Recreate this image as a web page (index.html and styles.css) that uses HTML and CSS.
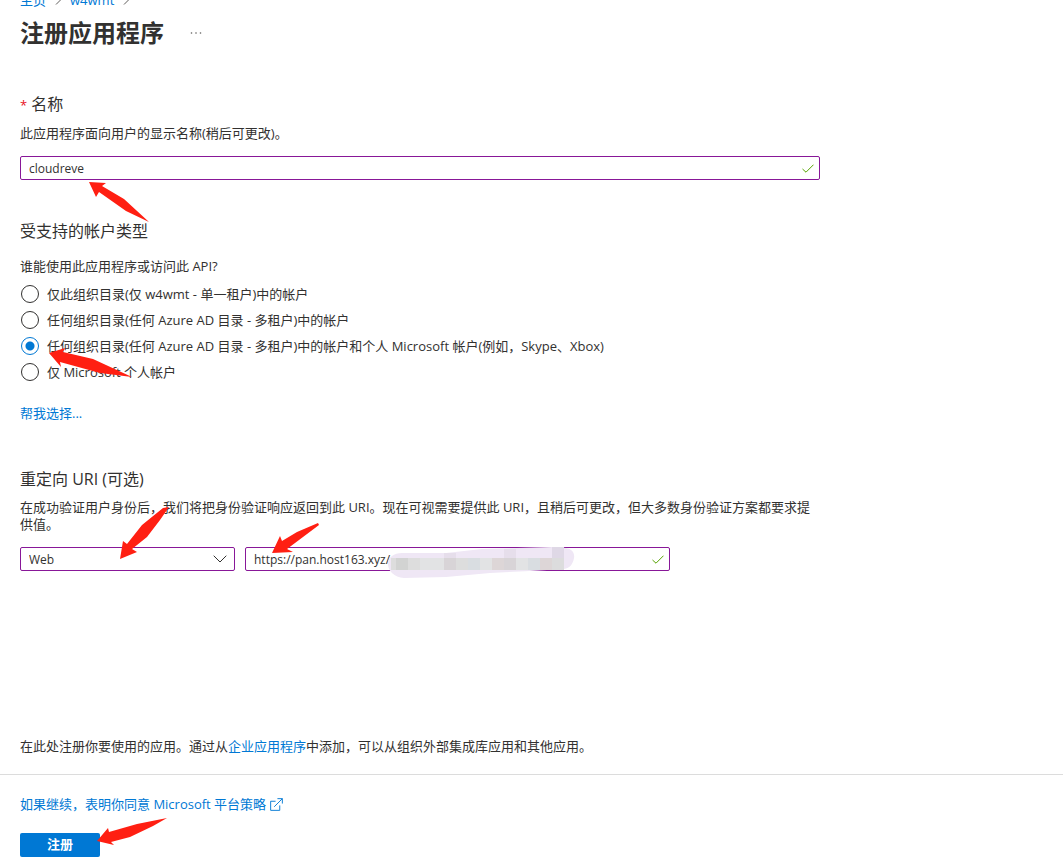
FILE: index.html
```
<!DOCTYPE html>
<html lang="zh-CN">
<head>
<meta charset="UTF-8">
<meta name="viewport" content="width=device-width, initial-scale=1.0">
<title>注册应用程序</title>
<link rel="stylesheet" href="styles.css">
</head>
<body>
<nav class="breadcrumb">
    <a href="#">主页</a>
    <svg width="6" height="10" viewBox="0 0 6 10"><path d="M1 0.5 5.5 5 1 9.5"/></svg>
    <a href="#">w4wmt</a>
    <svg width="6" height="10" viewBox="0 0 6 10"><path d="M1 0.5 5.5 5 1 9.5"/></svg>
</nav>

<header class="header">
    <h1>注册应用程序</h1>
    <button type="button" class="more" aria-label="更多">
        <svg width="12" height="4" viewBox="0 0 12 4"><circle cx="1.5" cy="2" r="0.8"/><circle cx="6" cy="2" r="0.8"/><circle cx="10.5" cy="2" r="0.8"/></svg>
    </button>
</header>

<form id="registerForm">
    <div class="content">
        <section class="section">
            <h2><label for="nameInput"><span class="required">*</span> 名称</label></h2>
            <p class="desc">此应用程序面向用户的显示名称(稍后可更改)。</p>
            <div class="field">
                <input type="text" id="nameInput" class="control" value="cloudreve">
                <svg class="field-icon check" width="12" height="9" viewBox="0 0 12 9"><path d="M0.5 5 4 8.2 11.5 0.7"/></svg>
            </div>
        </section>

        <section class="section">
            <h2>受支持的帐户类型</h2>
            <fieldset class="options">
                <legend>谁能使用此应用程序或访问此 API?</legend>
                <label class="option"><input type="radio" name="account">仅此组织目录(仅 w4wmt - 单一租户)中的帐户</label>
                <label class="option"><input type="radio" name="account">任何组织目录(任何 Azure AD 目录 - 多租户)中的帐户</label>
                <label class="option"><input type="radio" name="account" checked>任何组织目录(任何 Azure AD 目录 - 多租户)中的帐户和个人 Microsoft 帐户(例如，Skype、Xbox)</label>
                <label class="option"><input type="radio" name="account">仅 Microsoft 个人帐户</label>
            </fieldset>
            <p class="help"><a href="#">帮我选择...</a></p>
        </section>

        <section class="section">
            <h2>重定向 URI (可选)</h2>
            <p class="desc">在成功验证用户身份后，我们将把身份验证响应返回到此 URI。现在可视需要提供此 URI，且稍后可更改，但大多数身份验证方案都要求提供值。</p>
            <div class="redirect">
                <div class="field platform">
                    <select class="control" aria-label="平台">
                        <option>Web</option>
                    </select>
                    <svg class="field-icon chevron" width="14" height="8" viewBox="0 0 14 8"><path d="M0.7 0.7 7 7 13.3 0.7"/></svg>
                </div>
                <div class="field uri">
                    <input type="text" class="control" aria-label="重定向 URI" value="https://pan.host163.xyz/">
                    <svg class="field-icon check" width="12" height="9" viewBox="0 0 12 9"><path d="M0.5 5 4 8.2 11.5 0.7"/></svg>
                </div>
            </div>
        </section>

        <p class="note">在此处注册你要使用的应用。通过从<a href="#">企业应用程序</a>中添加，可以从组织外部集成库应用和其他应用。</p>
    </div>

    <footer class="footer">
        <a href="#" class="policy">如果继续，表明你同意 Microsoft 平台策略
            <svg width="13" height="13" viewBox="0 0 14 14"><path d="M6 3.5H0.7V13.3H10.5V8M8 0.7H13.3V6M13.3 0.7 4.5 9.5"/></svg>
        </a>
        <button type="submit" class="submit">注册</button>
    </footer>
</form>

<!-- 标注箭头和打码 -->
<svg class="marks" width="700" height="868" viewBox="0 0 700 868">
    <path fill="#efe7f5" d="M388 564C388 557 394 553 402 553L446 553 482 549 552 547 566 548C572 549 575 553 574 558 573 564 570 568 564 569L530 571 490 573 446 577 404 578C394 577 388 571 388 564Z"/>
    <g class="mosaic">
        <path fill="#dfd8e6" d="M552 547h12v11h-12z"/>
        <path fill="#e6deeb" d="M444 553h12v5h-12zM504 549h12v9h-12z"/>
        <path fill="#dddddd" d="M391 558h5v12h-5zM408 558h12v12h-12zM456 558h12v12h-12z"/>
        <path fill="#d2d3d2" d="M396 558h12v12h-12z"/>
        <path fill="#e2e3e4" d="M420 558h24v12h-24zM480 558h12v12h-12zM516 558h12v12h-12z"/>
        <path fill="#d8d4d7" d="M444 558h12v12h-12zM504 558h12v12h-12z"/>
        <path fill="#d9dde1" d="M468 558h12v12h-12zM528 558h12v12h-12z"/>
        <path fill="#ddd6d7" d="M492 558h12v12h-12zM540 558h12v12h-12z"/>
        <path fill="#dcdcdd" d="M552 558h12v12h-12z"/>
    </g>
    <g fill="#ff1f12">
        <path d="M89 182 106 183 102 186 124 199 149 222 126 211 99 192 96 197Z"/>
        <path d="M49 353 65 348 63 352 93 359 132 377 100 373 60 362 61 367Z"/>
        <path d="M120 559 123 541 127 544 142 525 163 508 169 507 160 520 147 537 132 549 137 552Z"/>
        <path d="M272 553 280 536 282 541 297 532 318 523 319 525 307 534 287 549 293 552Z"/>
        <path d="M97 841 108 828 109 832 137 824 167 818 153 826 130 837 111 842 114 845Z"/>
    </g>
</svg>
</body>
</html>
```
FILE: styles.css
```
* {
    box-sizing: border-box;
}

body {
    position: relative;
    margin: 0;
    background: #fff;
    color: #323130;
    font-family: "Segoe UI", "Open Sans", "Noto Sans CJK SC", sans-serif;
    font-size: 13px;
    line-height: 17px;
}

h1, h2, p {
    margin: 0;
}

a {
    color: #0078d4;
    text-decoration: none;
}

a:hover {
    text-decoration: underline;
}

svg {
    fill: none;
}

.breadcrumb {
    display: flex;
    align-items: center;
    gap: 9px;
    margin-top: -9px;
    padding: 0 20px;
    line-height: 18px;
}

.breadcrumb svg {
    stroke: #605e5c;
}

.header {
    display: flex;
    align-items: center;
    gap: 20px;
    padding: 8px 20px 0;
}

.header h1 {
    font-size: 24px;
    line-height: 32px;
}

.more {
    display: flex;
    padding: 6px;
    border: none;
    background: none;
}

.more svg {
    fill: #605e5c;
}

.content {
    max-width: 840px;
    padding: 44px 20px 19px;
}

.section {
    margin-bottom: 40px;
}

.section h2 {
    margin-bottom: 9px;
    font-size: 16px;
    font-weight: normal;
    line-height: 22px;
}

.required {
    color: #e81123;
    font-size: 13px;
}

.desc {
    margin-bottom: 14px;
}

.field {
    position: relative;
}

.control {
    display: block;
    width: 100%;
    height: 24px;
    padding: 0 28px 0 8px;
    border: 1px solid #881798;
    border-radius: 2px;
    background: #fff;
    color: #323130;
    font: inherit;
    font-size: 12px;
    appearance: none;
}

.field-icon {
    position: absolute;
    top: 8px;
    right: 6px;
    pointer-events: none;
}

.check {
    stroke: #57a300;
}

.chevron {
    right: 8px;
    stroke: #323130;
}

.options {
    margin: 0;
    padding: 6px 0 0;
    border: none;
}

.options legend {
    padding: 7px 0 0;
}

.option {
    display: flex;
    align-items: center;
    gap: 8px;
    height: 26px;
}

.option input {
    width: 18px;
    height: 18px;
    margin: 0 0 0 1px;
    border: 1px solid #323130;
    border-radius: 50%;
    appearance: none;
}

.option input:checked {
    border-color: #0078d4;
    background: radial-gradient(circle, #0078d4 4px, transparent 5px);
}

.help {
    margin: 20px 0 46px;
}

.redirect {
    display: flex;
    gap: 10px;
    max-width: 650px;
}

.platform {
    flex: 215;
}

.uri {
    flex: 425;
}

.note {
    margin-top: 167px;
}

.footer {
    display: flex;
    flex-direction: column;
    align-items: flex-start;
    gap: 20px;
    padding: 21px 20px 11px;
    border-top: 1px solid #dcdcdc;
}

.policy {
    display: flex;
    align-items: center;
    gap: 4px;
}

.policy svg {
    stroke: #0078d4;
}

.submit {
    width: 80px;
    height: 24px;
    padding: 0 0 2px;
    border: none;
    border-radius: 2px;
    background: #0078d4;
    color: #fff;
    font: inherit;
    font-weight: bold;
    cursor: pointer;
}

.marks {
    position: absolute;
    top: 0;
    left: 0;
    pointer-events: none;
}
```
